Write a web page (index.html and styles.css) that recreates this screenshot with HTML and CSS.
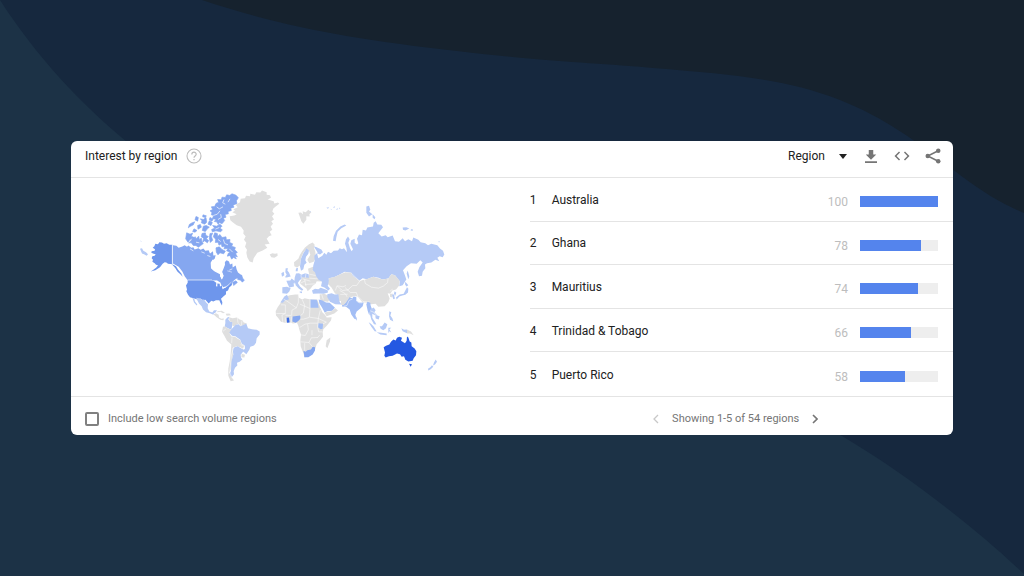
FILE: index.html
```html
<!DOCTYPE html>
<html lang="en">
<head>
<meta charset="utf-8">
<title>Interest by region</title>
<link rel="stylesheet" href="styles.css">
</head>
<body>
<svg class="backdrop" viewBox="0 0 1024 576" preserveAspectRatio="none" aria-hidden="true">
  <path class="backdrop-dark" d="M202 0C280 26 350 39 457 51C560 63 600 63 653 68C740 75 790 80 840 100C885 118 915 140 960 175C985 194 1005 205 1024 213V0Z"/>
  <path class="backdrop-teal" d="M0 0C36 56 80 103 127 142C350 320 650 330 842 436C900 470 970 523 1024 574V576H0Z"/>
</svg>
<main class="card">
  <header class="card-header">
    <h1 class="title">Interest by region</h1>
    <button class="icon-button help" aria-label="Help">
      <svg width="16" height="16" viewBox="0 0 16 16"><circle cx="8" cy="8" r="7" fill="none" stroke="currentColor" stroke-width="1.1"/><path d="M5.8 6.500C5.8 3.4 10.2 3.500 10.2 6.300C10.2 8 8 8 8 9.800M8 11V12.300" fill="none" stroke="currentColor" stroke-width="1.2"/></svg>
    </button>
    <div class="tools">
      <div class="select-wrap">
        <select class="select" aria-label="Resolution"><option>Region</option></select>
        <svg class="caret" width="8" height="5" viewBox="0 0 8 5"><path d="M0 0H8L4 5Z" fill="#212121"/></svg>
      </div>
      <button class="icon-button" aria-label="Download"><svg width="18" height="18" viewBox="0 0 24 24"><path fill="currentColor" d="M19 10h-4V4H9v6H5l7 7 7-7zM4 19v2.200h16V19z"/></svg></button>
      <button class="icon-button" aria-label="Embed"><svg width="18" height="18" viewBox="0 0 24 24"><path fill="currentColor" d="M9.400 16.600 4.800 12l4.600-4.600L8 6l-6 6 6 6zM14.600 16.600l4.600-4.600-4.600-4.600L16 6l6 6-6 6z"/></svg></button>
      <button class="icon-button" aria-label="Share"><svg width="18" height="18" viewBox="0 0 24 24"><path d="M19 5 5 12l14 7" fill="none" stroke="currentColor" stroke-width="2"/><g fill="currentColor"><circle cx="19" cy="5" r="3"/><circle cx="5" cy="12" r="3"/><circle cx="19" cy="19" r="3"/></g></svg></button>
    </div>
  </header>
  <section class="content">
    <div class="map-panel">
      <svg class="map" viewBox="130 185 325 205" role="img" aria-label="World map of search interest">
        <!-- North America -->
        <g transform="translate(130 185) scale(.33333)">
          <path class="us" d="M127 184L118 184 110 179 102 181 96 177 88 176 84 182 76 181 73 188 68 193 75 197 74 202 65 203 64 208 71 211 77 212 74 217 67 218 65 224 69 229 67 235 74 239 78 244 84 245 79 252 68 260 62 264 76 260 90 251 98 241 104 236 109 237 114 241 127 242 138 248 144 258 154 270 158 280 151 272 142 264 136 254 127 244Z"/>
          <path class="soft" d="M30 196L36 194 40 202 48 206 54 212 50 217 42 212 36 210Z M31 171L35 173 33 175Z"/>
          <path class="canada" d="M129 185L139 187 146 193 157 189 164 185 171 190 175 186 184 193 190 191 194 198 205 194 212 199 220 195 226 202 236 200 240 210 249 203 250 216 257 215 254 226 246 232 243 244 243 252 250 260 261 264 270 268 270 278 276 288 281 276 276 266 281 254 285 244 284 236 290 230 297 234 300 243 307 240 308 252 317 246 320 258 324 267 336 276 328 284 318 286 309 293 304 302 296 304 282 314 276 306 270 300 262 292 250 290H173L164 278 157 264 146 250 129 240Z"/>
          <path class="canada islands" d="M326 278L335 275 338 284 343 290 337 296 332 290 323 288ZM308 296L318 292 322 297 311 306ZM258 60L266 56 263 48 274 49 276 41 286 42 290 34 299 36 306 31 318 35 325 43 319 52 321 60 309 65 312 71 302 74 304 81 294 84 295 91 285 93 288 101 280 104 284 111 276 121 268 117 265 123 260 115 253 114 258 107 247 106 251 96 244 94 246 87 240 82 248 78 244 70 254 69ZM260 128L270 122 276 128 270 134 277 139 272 145 258 142 247 145 245 138 254 134 248 126ZM170 148L180 152 188 149 184 158 192 162 180 168 174 176 167 166ZM188 164L196 160 198 166 206 158 208 168 214 164 216 176 220 180 211 187 205 191 198 186 190 186 184 178 176 178 183 172ZM216 150L226 148 228 156 235 159 229 166 236 171 232 178 224 172 218 176 221 164 214 160ZM240 150L248 149 244 158 248 170 241 177 238 164ZM254 148L262 150 263 159 270 153 276 162 288 160 289 169 300 168 299 177 308 181 305 188 316 192 314 199 322 206 317 211 322 220 314 218 319 226 310 222 305 227 300 216 292 218 295 209 301 206 290 202 294 195 282 196 284 188 276 190 274 181 267 185 264 176 256 177 257 167 250 160ZM258 193L268 190 276 198 286 203 281 211 270 208 264 214 259 206ZM198 99L205 102 203 113 195 109ZM184 119L194 115 190 124 180 129 175 133 178 123ZM211 106L220 108 228 102 230 116 224 122 214 118 216 112ZM203 126L211 123 214 131 204 137ZM220 128L229 126 238 131 232 136 226 144 217 141ZM238 112L247 117 243 126 234 122ZM192 136L201 141 195 146 188 144ZM219 94L229 97 226 102 218 100ZM240 102L249 107 246 113 238 109Z"/>
          <g class="cuts"><path d="M250 96L262 92 270 82M260 70L268 76 279 70M282 48L278 58 286 62M300 46L294 56M264 108L274 102 272 92M264 168L272 174M280 168L284 180 294 184M298 196L308 206M198 176L208 178M190 202L180 196M214 205L224 209M232 216L241 219M268 132L256 137M307 256L298 260"/></g>
          <path class="water" d="M248 228L256 236 268 230 274 218 283 216 285 230 283 244 276 256 276 264 280 278 275 288 270 272 254 264 243 254 242 238Z"/>
          <path class="us" d="M173 290H244L251 292 258 293 268 297 276 305 277 315 291 309 302 299 307 300 304 307 298 311 294 321 288 324 288 332 280 339 273 346 277 356 276 366 271 358 268 350 258 350 250 354 244 352 236 360 226 349 218 350 211 345 203 348 190 344 180 341 174 334 169 323 171 318 168 306 173 298Z"/>
          <path class="water" d="M252 293L261 291 271 297 275 307 270 309 269 301 262 300 262 309 258 308 259 298ZM276 313L286 309 289 311 279 316Z"/>
          <path class="border" d="M127 184V243M173 289H246M277 316L292 307 304 296M292 262L306 266"/>
        </g>
        <!-- Latin America -->
        <g transform="translate(190 290) scale(.33333)">
          <path class="soft" d="M18 28L28 29 34 33 42 33 49 43 54 47 53 59 58 69 67 72 72 65 81 65 76 73 72 74 70 79 60 74 48 71 39 63 35 53 27 45ZM7 28L13 31 15 39 22 48 20 51 12 42Z"/>
          <path class="none" d="M70 77L78 74 86 79 87 87 94 91 102 90 100 95 91 94 80 86ZM82 68L95 67 105 73 99 74 91 70 82 71ZM107 76L118 75 123 80 110 82Z"/>
          <path class="soft" d="M106 94L112 87 118 85 115 93 120 99 129 101 127 110 124 124 114 119 104 114 106 104Z"/>
          <path class="none" d="M117 86L128 89 141 87 149 93 158 96 161 102 170 104 167 112 151 112 146 105 136 110 132 114 127 111 127 101 119 98ZM99 115L106 114 114 120 124 124 119 135 124 144 135 145 142 150 151 155 154 166 163 171 159 181 151 176 141 173 132 176 127 181 129 200 125 219 122 244 118 252 124 265 132 276 122 278 115 262 115 240 119 220 122 196 124 168 111 157 103 142 96 130Z"/>
          <path class="soft" d="M118 133L123 124 130 116 137 109 146 107 151 113 169 106 174 119 186 122 200 124 209 129 209 138 200 149 198 163 192 171 181 175 178 184 169 197 163 192 158 188 165 180 164 171 155 165 151 154 136 143 126 142ZM132 177L143 173 154 180 162 184 158 191 152 199 153 207 157 213 149 220 141 223 142 231 135 238 131 248 132 257 125 266 119 257 123 246 124 220 130 198 128 182Z"/>
          <path class="none" d="M155 196L165 199 163 207 154 206Z"/>
          <path class="border" d="M98 129L108 121M126 147L125 164M142 87L144 103M156 96L154 111M131 176L124 202 119 252 127 269M152 168L164 173"/>
        </g>
        <!-- Greenland and Arctic islands -->
        <g transform="translate(225 185) scale(.33333)">
          <path class="none" d="M14 98L28 96 35 92 22 86 30 82 25 77 38 71 32 64 45 56 47 46 60 44 63 37 75 38 76 31 90 34 94 26 106 27 111 21 125 26 125 34 135 35 138 43 128 48 146 53 148 60 159 57 163 61 153 68 145 75 142 84 148 91 141 98 147 108 139 113 144 121 137 129 142 139 134 145 140 155 132 158 125 166 134 181 119 183 127 193 113 201 97 208 86 224 83 237 74 234 67 222 64 208 66 199 60 190 64 178 57 169 62 158 55 151 56 141 48 130 35 125 24 117 16 110ZM134 213L142 209 150 211 157 209 158 217 148 223 139 221ZM220 88L228 87 234 92 233 83 242 86 250 79 259 86 253 92 254 99 244 98 244 109 235 121 229 113 225 101Z"/>
        </g>
        <!-- Europe -->
        <g transform="translate(225 185) scale(.33333)">
          <path class="none" d="M208 248L207 236 220 226 225 214 231 204 240 192 252 182 263 177 269 184 267 193 271 205 273 222 266 235 253 239 247 229 256 214 252 202 246 195 235 208 228 224 225 246 216 252Z"/>
          <path class="soft" d="M225 248L228 226 235 209 245 194 252 201 250 211 243 220 241 230 245 238 238 244 235 257 228 262ZM213 255L219 253 218 263 212 263Z"/>
        </g>
        <!-- Africa, Europe south, Middle East -->
        <g transform="translate(265 260) scale(.33333)">
          <path class="soft" d="M52 86L66 85 77 89 73 99 66 106 52 104ZM64 67L76 66 80 60 90 68 86 75 87 84 73 87 69 79ZM89 58L93 45 102 44 109 49 121 44 131 47 132 59 119 61 113 57 103 67 97 76 88 75ZM62 29L69 29 67 36 72 42 77 54 65 57 60 56 65 48 61 41ZM49 44L56 40 58 50 51 55ZM91 75L99 74 105 84 115 93 111 97 101 90 92 80ZM104 99L111 99 111 104 104 102Z"/>
          <path class="none" d="M112 56L132 58 132 45 129 31 144 25 153 31 156 48 171 56 175 66 166 69 155 68 152 76 143 82 137 90 128 98 124 90 116 84 104 74Z"/>
          <path class="soft" d="M141 96L150 91 160 92 167 88 188 95 189 102 176 106 160 105 144 106Z"/>
          <path class="none" d="M164 108L178 106 189 111 194 123 189 130 174 128 165 123Z"/>
          <path class="none" d="M48 132L56 121 65 114 74 110 91 108 100 108 102 118 112 123 119 119 136 123 157 123 161 134 166 148 172 161 181 170 185 177 200 176 198 186 186 201 175 212 173 221 174 235 165 246 155 257 151 271 139 286 129 295 119 296 115 284 107 263 106 245 108 228 103 214 100 202 96 193 84 195 74 191 60 193 48 190 39 178 33 171 32 158 38 146ZM185 245L196 237 195 249 187 269 182 263Z"/>
          <path class="soft" d="M46 132L58 114 66 109 72 122 59 127 54 133Z"/>
          <path class="mid" d="M136 123L155 124 158 132 161 148H136ZM161 123L171 125 183 132 194 133 202 140 210 148 202 157 187 158 179 162 171 147 163 134ZM160 194L174 196 173 211 167 212 159 206Z"/>
          <path class="none" d="M178 162L199 158 211 149 219 156 208 165 185 173Z"/>
          <path class="canada" d="M83 174L106 171 106 181 99 188 92 193 82 189ZM115 277L122 280 127 275 138 273 143 265 150 266 150 276 143 288 130 296 118 296 117 285Z"/>
          <path class="ghana" d="M65 178L72 177 74 192 66 193Z"/>
          <path class="border" d="M56 122L69 130 94 148 100 132 100 109M48 139L61 139 61 165H34M94 148L81 155 80 170M105 137L135 150V124M112 124L119 140 115 164 106 172M135 150L133 176 160 180 166 155M61 165L51 170 53 190M61 170L80 171M61 177V192M79 174V193M106 182L115 182 132 177M104 207L120 197 136 194 158 194M160 180L158 206 161 220M106 229L121 231 130 214 128 197M107 250L132 252 139 238 158 237M119 254V277M132 252L143 265M161 220L172 220M141 215V230M160 180L184 191M174 196L184 191M113 61L136 68M133 47L152 51M133 59L158 61M106 74L121 67M119 63L123 83M120 78L152 76M143 36L154 36M123 44L121 58M108 49L109 59M190 104L199 116M170 108L175 123M164 230L157 238"/>
        </g>
        <!-- Russia and north Asia -->
        <g transform="translate(310 195) scale(.33333)">
          <path class="soft" d="M11 158L20 161 34 168 39 176 30 183 21 179 25 194 37 187 43 178 49 184 54 175 63 179 71 172 84 171 89 164 96 167 102 164 111 176 109 162 105 151 108 137 114 129 119 137 115 148 120 164 125 173 129 167 121 151 124 140 134 136 134 148 141 153 145 149 141 136 147 123 156 125 158 109 168 111 172 102 189 99 191 88 197 83 202 93 214 94 219 101 205 119 215 129 227 125 233 131 248 126 255 143 267 145 278 134 285 143 295 137 306 143 310 132 325 139 332 146 346 149 354 155 364 151 382 155 390 165 399 172 403 183 398 191 389 188 382 193 388 203 376 199 364 207 351 209 345 213 346 224 338 235 336 247 327 248 323 235 328 221 338 207 331 200 320 211 303 209 290 218 279 230 285 246 289 258 278 275 268 278 269 263 255 245 244 242 235 255 217 258 206 253 190 250 170 257 158 254 148 262 126 245 124 238 104 235 89 243 72 251 56 254 58 268 53 277 60 286 55 291 43 282 33 278 36 265 26 259 19 249 15 236 8 230 10 215 14 202 13 187 23 177Z"/>
          <path class="none" d="M57 254L75 250 89 243 106 236 124 238 128 247 149 262 169 257 190 250 205 254 218 258 235 255 244 242 255 245 269 262 267 277 258 288 247 291 241 301 233 299 239 315 235 326 224 338 205 340 197 331 184 332 172 328 157 326 143 309 131 308 118 313 116 321 99 319 88 324 82 302 75 300 65 283 55 272ZM240 302L248 300 247 312 240 310Z"/>
          <path class="soft" d="M52 302L65 299 74 303 85 302 88 323 94 333 76 332 60 325 52 311ZM246 304L251 302 255 315 250 317ZM286 265L295 275 289 279 285 272ZM291 281L295 286 294 297 286 304 277 306 268 309 260 318 258 312 269 303 281 301ZM293 231L298 248 295 257 290 240ZM104 93L109 96 94 104 83 115 79 131 77 143 69 142 71 128 78 112 91 99ZM169 39L177 37 181 49 177 54 187 62 177 69 169 58ZM188 62L196 71 194 77 188 73ZM278 102L289 101 298 105 286 111 279 109ZM303 107L309 108 308 112 302 111ZM49 43L57 41 54 46ZM62 46L66 47 63 49ZM68 42L74 38 75 42ZM78 47L84 44 82 49ZM88 42L91 44 88 47ZM385 143L390 144 387 147ZM0 53L3 54 2 57Z"/>
          <path class="border" d="M125 240L149 263 156 258M149 263L140 276 128 276 114 289 97 291 81 277 76 291M89 291L105 300 115 315M105 282L121 297 139 297 143 308M163 257L166 270 184 281 205 284 220 278 233 267 234 255M91 303L113 302M144 309L159 324 180 326M240 293L248 287M82 277L99 280 108 276"/>
        </g>
        <!-- South Asia and Oceania -->
        <g transform="translate(330 280) scale(.33333)">
          <path class="mid" d="M36 81L46 73 51 64 58 56 67 59 71 54 79 56 79 67 88 72 101 72 98 83 91 90 80 99 76 109 80 122 73 121 64 108 59 93 48 85 36 84ZM109 78L112 70 121 73 122 81 127 95 120 98 118 111 113 97Z"/>
          <path class="none" d="M33 55L45 60 57 51 56 61 48 72 40 80 33 79Z"/>
          <path class="soft" d="M120 94L131 87 137 95 133 101 142 111 149 113 146 123 137 120 136 111 127 106 127 118 136 132 139 138 132 137 124 123 120 108ZM116 131L123 136 131 144 140 159 134 158 124 145ZM140 161L154 163 170 165 170 170 151 168ZM149 143L156 143 164 132 172 137 168 149 160 155 152 151ZM175 148L184 148 178 152 184 162 178 158 175 164ZM178 98L184 101 181 111 187 119 190 129 180 124 177 113ZM214 149L222 154 231 153 231 164 218 158ZM317 243L321 250 315 258 309 261 312 252ZM306 260L310 265 302 272 295 276 294 271 301 266ZM194 38L199 43 195 53 192 45ZM76 112L80 118 81 127 77 122Z"/>
          <path class="none" d="M231 153L243 159 251 170 240 165 231 165Z"/>
          <path class="border" d="M42 83L51 81 57 66 68 61M79 67L87 73 97 73M121 97L131 101 139 113M102 72L108 80"/>
          <path class="australia" d="M161 206L168 202 178 198 183 190 190 183 197 186 201 178 208 175 216 178 213 187 225 194 230 187 231 174 235 177 239 189 244 192 245 203 254 210 259 218 258 230 251 239 248 247 235 249 226 244 222 233 215 235 210 227 201 225 188 232 177 233 167 237 163 232 165 222ZM237 256L246 257 242 265Z"/>
        </g>
      </svg>
    </div>
    <ol class="regions">
      <li class="row"><span class="rank">1</span><span class="name">Australia</span><span class="score">100</span><span class="bar"><span class="fill" style="width:100%"></span></span></li>
      <li class="row"><span class="rank">2</span><span class="name">Ghana</span><span class="score">78</span><span class="bar"><span class="fill" style="width:78%"></span></span></li>
      <li class="row"><span class="rank">3</span><span class="name">Mauritius</span><span class="score">74</span><span class="bar"><span class="fill" style="width:74%"></span></span></li>
      <li class="row"><span class="rank">4</span><span class="name">Trinidad &amp; Tobago</span><span class="score">66</span><span class="bar"><span class="fill" style="width:66%"></span></span></li>
      <li class="row"><span class="rank">5</span><span class="name">Puerto Rico</span><span class="score">58</span><span class="bar"><span class="fill" style="width:58%"></span></span></li>
    </ol>
  </section>
  <footer class="card-footer">
    <label class="low-volume"><input class="checkbox" type="checkbox">Include low search volume regions</label>
    <nav class="pager" aria-label="Region pages">
      <button class="icon-button prev" aria-label="Previous" disabled><svg width="6" height="10" viewBox="0 0 6 10"><path d="M5 1 1 5l4 4" fill="none" stroke="currentColor" stroke-width="1.300"/></svg></button>
      <span>Showing 1-5 of 54 regions</span>
      <button class="icon-button" aria-label="Next"><svg width="6" height="10" viewBox="0 0 6 10"><path d="m1 1 4 4-4 4" fill="none" stroke="currentColor" stroke-width="1.600"/></svg></button>
    </nav>
  </footer>
</main>
</body>
</html>
```
FILE: styles.css
```css
* { box-sizing: border-box; }

body {
  margin: 0;
  min-height: 100vh;
  display: flex;
  align-items: center;
  justify-content: center;
  background: #16283e;
  color: #212121;
  font: 12px/16px Roboto, sans-serif;
}

.backdrop {
  position: absolute;
  inset: 0;
  width: 100%;
  height: 100%;
}
.backdrop-dark { fill: #16222e; }
.backdrop-teal { fill: #1c3246; }

.card {
  position: relative;
  width: calc(100% - 142px);
  background: #fff;
  border-radius: 6px;
  overflow: hidden;
}

.card-header {
  display: flex;
  align-items: center;
  gap: 9px;
  padding: 6px 11px 12px 14px;
  border-bottom: 1px solid #e4e4e4;
}

.title { margin: 0; font-size: 12px; line-height: 18px; font-weight: 400; }

.icon-button {
  display: flex;
  padding: 0;
  border: 0;
  background: none;
  color: #757575;
}
.help { color: #bdbdbd; }

.tools {
  display: flex;
  align-items: center;
  gap: 13px;
  margin-left: auto;
}
.select-wrap { position: relative; display: flex; align-items: center; margin-right: 2px; }
.select {
  appearance: none;
  width: 59px;
  padding: 0;
  border: 0;
  background: none;
  color: inherit;
  font: inherit;
}
.caret { position: absolute; right: 0; pointer-events: none; }

.content {
  display: grid;
  grid-template-columns: 52% 48%;
}
.map-panel { padding: 5px 0 7px 59px; }
.map { display: block; width: 325px; height: 206px; max-width: 100%; }
.us { fill: #6e96ec; }
.canada { fill: #85a7f0; }
.islands { stroke: #85a7f0; stroke-width: 2; }
.mid { fill: #a3bef5; }
.soft { fill: #b5caf6; }
.none { fill: #dfdfdf; }
.ghana { fill: #3d6de4; }
.australia { fill: #2458e2; }
.water { fill: #fff; }
.cuts, .border { fill: none; stroke: #fff; stroke-width: 2; }
.border { stroke-opacity: .75; }

.regions {
  display: grid;
  grid-auto-rows: 1fr;
  margin: 0;
  padding: 0;
  list-style: none;
}
.row {
  display: grid;
  grid-template-columns: 22px 1fr auto 78px;
  align-items: center;
  padding-right: 15px;
  border-bottom: 1px solid #e4e4e4;
}
.row:last-child { border-bottom: 0; }
.rank, .name { padding-top: 1px; }
.score { padding: 6px 12px 0 0; color: #bdbdbd; }
.bar { height: 11px; margin-top: 5px; background: #eee; }
.fill { display: block; height: 100%; background: #5484ed; }

.card-footer {
  display: grid;
  grid-template-columns: 66% 34%;
  align-items: center;
  padding: 14px 0 8px;
  border-top: 1px solid #e4e4e4;
  color: #757575;
  font-size: 11px;
}
.low-volume { display: flex; align-items: center; gap: 9px; padding-left: 14px; }
.checkbox {
  appearance: none;
  width: 14px;
  height: 14px;
  margin: 0;
  border: 2px solid #808080;
  border-radius: 2px;
  background: #fff;
}
.pager { display: flex; align-items: center; gap: 13px; }
.prev { color: #c8c8c8; }
```
